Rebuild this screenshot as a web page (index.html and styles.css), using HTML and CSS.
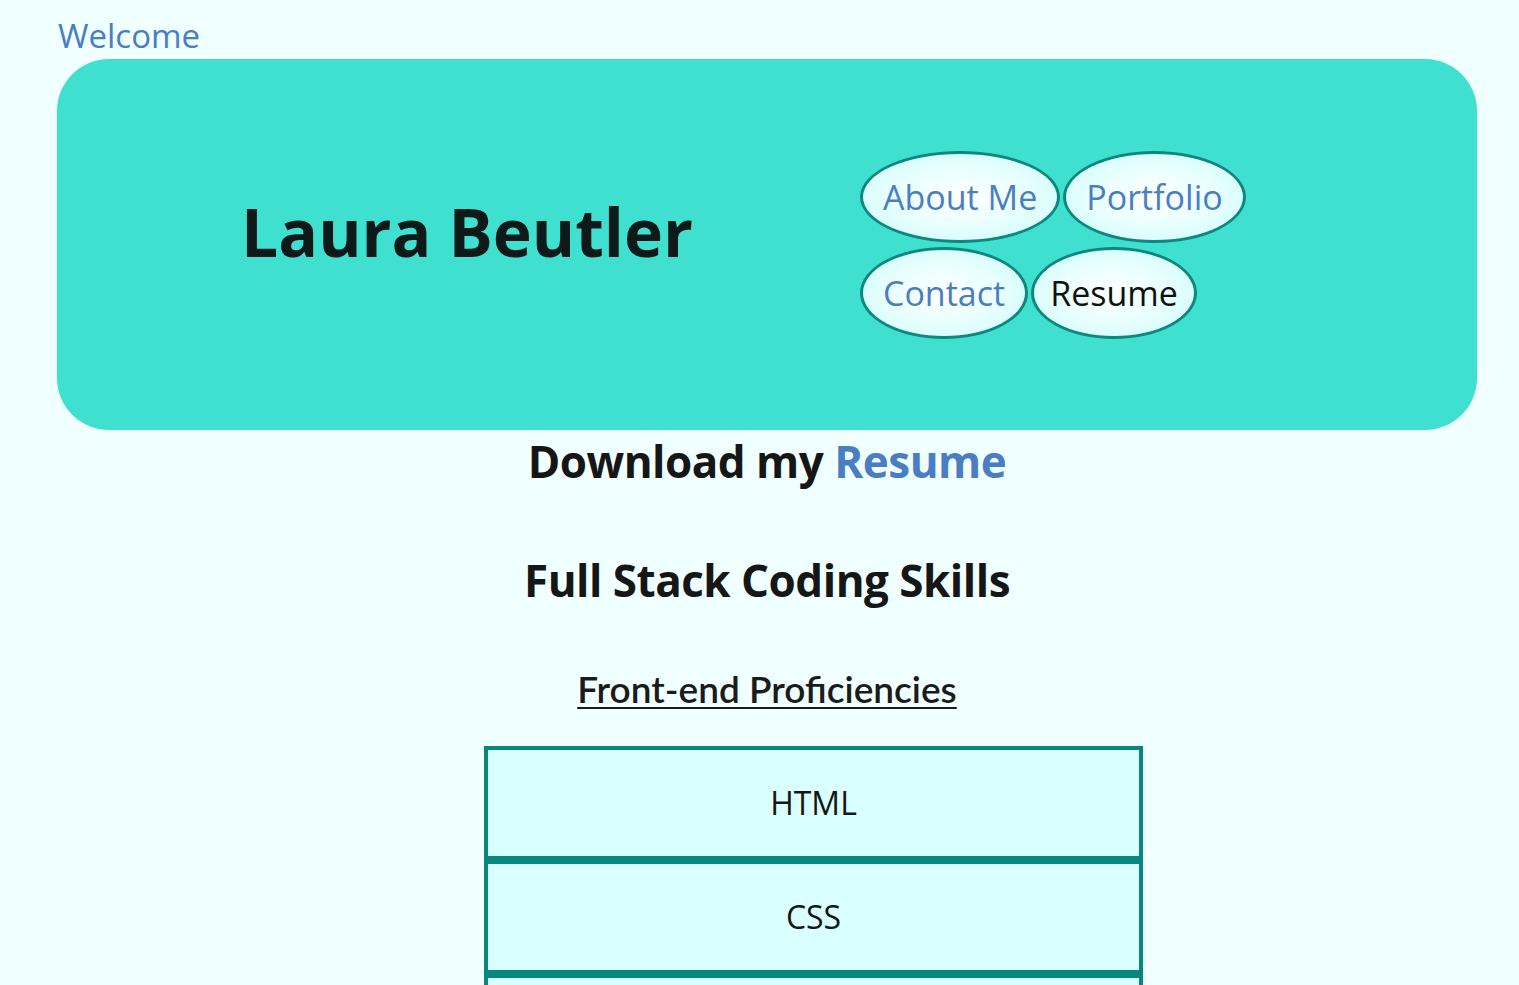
FILE: index.html
```html
<!DOCTYPE html>
<html lang="en">
<head>
<meta charset="utf-8">
<title>Laura Beutler - Resume</title>
<link rel="stylesheet" href="styles.css">
</head>
<body>
<div class="page">
  <a class="welcome" href="#">Welcome</a>
  <header class="hero">
    <div class="hero-title">
      <h1>Laura Beutler</h1>
    </div>
    <nav class="nav">
      <a class="pill" href="#">About Me</a>
      <a class="pill" href="#">Portfolio</a>
      <a class="pill" href="#">Contact</a>
      <a class="pill current" href="#">Resume</a>
    </nav>
  </header>
  <h2 class="download">Download my <a href="#">Resume</a></h2>
  <h2 class="skills">Full Stack Coding Skills</h2>
  <h3 class="sub">Front-end Proficiencies</h3>
  <ul class="skill-list">
    <li>HTML</li>
    <li>CSS</li>
    <li>JavaScript</li>
  </ul>
</div>
</body>
</html>
```
FILE: styles.css
```css
html, body {
  margin: 0;
  padding: 0;
  background: #f0ffff;
}
body {
  font-family: "Comic Sans MS", "Open Sans", sans-serif;
  color: #161616;
}
.page {
  margin: 0 42px 0 57px;
  padding-top: 14px;
}
.welcome {
  display: block;
  font-size: 33px;
  line-height: 44px;
  height: 45px;
  color: #4a7ec2;
  text-decoration: none;
  padding-left: 1px;
}
.hero {
  background: #40e0d0;
  border-radius: 52px;
  height: 371px;
  display: flex;
  align-items: center;
}
.hero-title {
  box-sizing: border-box;
  width: 803px;
  display: flex;
  justify-content: center;
  padding: 0 0 28px 17px;
}
.hero h1 {
  margin: 0;
  font-size: 66px;
  font-weight: bold;
  color: #0e1a1a;
}
.nav {
  width: 400px;
  display: flex;
  flex-wrap: wrap;
  gap: 4px 3px;
}
.pill {
  display: block;
  height: 86px;
  padding: 0 20px;
  line-height: 86px;
  border: 3px solid #0d887e;
  border-radius: 50%;
  background: radial-gradient(ellipse at center, #ffffff 0%, #eaffff 45%, #c9fbfb 100%);
  color: #4a7ec2;
  font-size: 34px;
  text-decoration: none;
}
.pill.current {
  color: #111;
  padding: 0 16px;
}
.download, .skills {
  margin: 0;
  text-align: center;
  font-size: 44px;
  font-weight: bold;
  line-height: 62px;
  letter-spacing: -0.5px;
}
.download a {
  color: #4a7ec2;
  text-decoration: none;
}
.skills {
  margin-top: 57px;
}
.sub {
  margin: 56px 0 0;
  text-align: center;
  font-family: Lato, "Liberation Sans", sans-serif;
  font-weight: 600;
  font-size: 37px;
  line-height: 44px;
  text-decoration: underline;
  text-decoration-thickness: 2px;
  text-underline-offset: 4px;
  color: #1b1b1b;
}
.skill-list {
  list-style: none;
  margin: 35px 0 0;
  padding: 0 0 0 93px;
}
.skill-list li {
  width: 651px;
  margin: 0 auto;
  height: 106px;
  line-height: 106px;
  border: 4px solid #08877f;
  background: #d9fffe;
  text-align: center;
  font-size: 32px;
}
```
